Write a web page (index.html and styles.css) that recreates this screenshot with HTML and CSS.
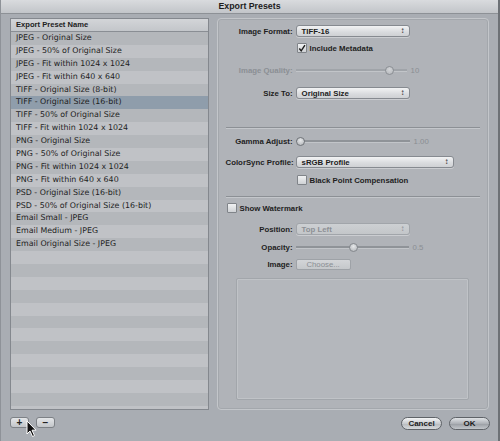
FILE: index.html
```html
<!DOCTYPE html>
<html>
<head>
<meta charset="utf-8">
<link rel="stylesheet" href="styles.css">
</head>
<body>
<div class="window">
  <div class="titlebar">Export Presets</div>
  <div class="main">
    <div class="list">
      <div class="list-head">Export Preset Name</div>
      <div class="rows">
        <div class="row">JPEG - Original Size</div>
        <div class="row">JPEG - 50% of Original Size</div>
        <div class="row">JPEG - Fit within 1024 x 1024</div>
        <div class="row">JPEG - Fit within 640 x 640</div>
        <div class="row">TIFF - Original Size (8-bit)</div>
        <div class="row selected">TIFF - Original Size (16-bit)</div>
        <div class="row">TIFF - 50% of Original Size</div>
        <div class="row">TIFF - Fit within 1024 x 1024</div>
        <div class="row">PNG - Original Size</div>
        <div class="row">PNG - 50% of Original Size</div>
        <div class="row">PNG - Fit within 1024 x 1024</div>
        <div class="row">PNG - Fit within 640 x 640</div>
        <div class="row">PSD - Original Size (16-bit)</div>
        <div class="row">PSD - 50% of Original Size (16-bit)</div>
        <div class="row">Email Small - JPEG</div>
        <div class="row">Email Medium - JPEG</div>
        <div class="row">Email Original Size - JPEG</div>
        <div class="row"></div>
        <div class="row"></div>
        <div class="row"></div>
        <div class="row"></div>
        <div class="row"></div>
        <div class="row"></div>
        <div class="row"></div>
        <div class="row"></div>
        <div class="row"></div>
        <div class="row"></div>
        <div class="row"></div>
        <div class="row"></div>
        <div class="row"></div>
      </div>
    </div>
    <div class="panel">
      <div class="frow r1">
        <span class="label">Image Format:</span>
        <div class="popup w-short"><span>TIFF-16</span><span class="arrows">&#x2195;</span></div>
      </div>
      <div class="frow r2">
        <span class="label"></span>
        <div class="check checked"><svg width="9" height="9" viewBox="0 0 9 9"><path d="M1.5 4.5 L3.6 7.2 L7.8 0.8" fill="none" stroke="#1c1c1c" stroke-width="1.6"/></svg></div>
        <span class="ctext">Include Metadata</span>
      </div>
      <div class="frow r3 disabled">
        <span class="label">Image Quality:</span>
        <div class="slider s1"><div class="knob" style="left:89px"></div></div>
        <span class="val">10</span>
      </div>
      <div class="frow r4">
        <span class="label">Size To:</span>
        <div class="popup w-short"><span>Original Size</span><span class="arrows">&#x2195;</span></div>
      </div>
      <div class="sep sep1"></div>
      <div class="frow r5">
        <span class="label">Gamma Adjust:</span>
        <div class="slider s2"><div class="knob" style="left:0px"></div></div>
        <span class="val">1.00</span>
      </div>
      <div class="frow r6">
        <span class="label">ColorSync Profile:</span>
        <div class="popup w-long"><span>sRGB Profile</span><span class="arrows">&#x2195;</span></div>
      </div>
      <div class="frow r7">
        <span class="label"></span>
        <div class="check"></div>
        <span class="ctext">Black Point Compensation</span>
      </div>
      <div class="sep sep2"></div>
      <div class="frow r8 noindent">
        <div class="check"></div>
        <span class="ctext">Show Watermark</span>
      </div>
      <div class="frow r9">
        <span class="label">Position:</span>
        <div class="popup w-short dim"><span>Top Left</span><span class="arrows">&#x2195;</span></div>
      </div>
      <div class="frow r10">
        <span class="label">Opacity:</span>
        <div class="slider s3 dimslider"><div class="knob" style="left:53px"></div></div>
        <span class="val">0.5</span>
      </div>
      <div class="frow r11">
        <span class="label">Image:</span>
        <div class="button dim">Choose...</div>
      </div>
      <div class="well"></div>
    </div>
  </div>
  <div class="footer">
    <div class="small-btns">
      <div class="sbtn">+</div>
      <div class="sbtn">&#x2212;</div>
    </div>
    <div class="dlg-btns">
      <div class="pill">Cancel</div>
      <div class="pill ok">OK</div>
    </div>
  </div>
  <svg class="cursor" width="12" height="18" viewBox="0 0 12 18"><path d="M1 1 L1 14 L4 11 L6.5 16.5 L8.5 15.6 L6 10.2 L10 10.2 Z" fill="#111" stroke="#fff" stroke-width="1"/></svg>
</div>
</body>
</html>
```

FILE: styles.css
```css
* { box-sizing: border-box; }
html, body { margin: 0; padding: 0; }
body { width: 500px; height: 441px; overflow: hidden; background: #a8acb2; font-family: "Liberation Sans", Arial, sans-serif; color: #1b1b1b; }

.window { position: relative; width: 500px; height: 441px; display: flex; flex-direction: column; background: #a9adb3; border-left: 1px solid #8e9298; border-right: 2px solid #6d7176; }

.titlebar { height: 14px; flex: none; background: linear-gradient(#d9dbde, #c2c5c9); border-bottom: 1px solid #8d9196; text-align: center; font-weight: bold; font-size: 8.8px; line-height: 13px; color: #1d1d1d; }

.main { display: flex; gap: 8px; padding: 4px 9px 0 9px; height: 396px; flex: none; }

.list { width: 199px; height: 392px; border: 1px solid #84888e; background: #c1c3c7; display: flex; flex-direction: column; overflow: hidden; }
.list-head { height: 13px; flex: none; background: linear-gradient(#d3d5d8, #c3c6ca); border-bottom: 1px solid #8a8e94; font-weight: bold; font-size: 7.6px; line-height: 12px; padding-left: 5px; color: #222; }
.rows { flex: 1; overflow: hidden; }
.row { height: 12.9px; line-height: 12.9px; font-family: "DejaVu Sans", "Liberation Sans", sans-serif; font-size: 7.9px; padding-left: 5px; white-space: nowrap; background: #c0c2c6; color: #1e1e1e; }
.row:nth-child(odd) { background: #b4b7bb; }
.row.selected { background: #8f9dab; }

.panel { width: 273px; height: 392px; border: 1px solid #c3c6ca; border-radius: 4px; background: #b0b3b8; box-shadow: inset 0 0 0 1px #a3a7ac; padding: 6px 8px 0 8px; display: flex; flex-direction: column; }

.frow { display: flex; align-items: center; height: 12px; flex: none; }
.label { width: 67px; flex: none; text-align: right; font-weight: bold; font-size: 7.8px; margin-right: 3px; white-space: nowrap; color: #1e1e1e; }
.r1 { margin-top: 0; }
.r2 { margin-top: 5px; }
.r3 { margin-top: 10px; }
.r4 { margin-top: 11px; }
.sep1 { margin-top: 28px; }
.r5 { margin-top: 6px; }
.r6 { margin-top: 9px; }
.r7 { margin-top: 6px; }
.sep2 { margin-top: 10px; }
.r8 { margin-top: 4px; }
.r9 { margin-top: 9px; }
.r10 { margin-top: 6px; }
.r11 { margin-top: 5px; }

.sep { height: 2px; flex: none; border-top: 1px solid #8c9095; border-bottom: 1px solid #c4c7cb; }

.popup { height: 12px; border: 1px solid #868a90; border-radius: 3px; background: linear-gradient(#f2f3f4, #d9dbde 60%, #cfd1d4); display: flex; justify-content: space-between; align-items: center; padding: 0 4px 0 5px; font-weight: bold; font-size: 7.8px; color: #1c1c1c; box-shadow: 0 1px 0 rgba(255,255,255,0.35); }
.w-short { width: 114px; }
.w-long { width: 158px; }
.arrows { font-size: 8px; font-weight: bold; line-height: 10px; }
.popup.dim { color: #8d9095; background: linear-gradient(#cdd0d3, #c3c6c9); border-color: #a1a5aa; }

.check { width: 10px; height: 10px; flex: none; border: 1px solid #808489; border-radius: 1px; background: linear-gradient(#f0f1f2, #cfd2d5); display: flex; align-items: center; justify-content: center; margin-left: 1px; }
.ctext { font-weight: bold; font-size: 7.8px; margin-left: 3px; color: #1e1e1e; white-space: nowrap; }
.noindent .check { margin-left: 1px; }

.slider { position: relative; height: 8px; flex: none; }
.slider::before { content: ""; position: absolute; left: 0; right: 0; top: 3px; height: 2px; background: #8f9398; border-bottom: 1px solid #c2c5c9; }
.s1 { width: 111px; }
.s2 { width: 114px; }
.s3 { width: 113px; }
.knob { position: absolute; top: 0; width: 9px; height: 9px; border-radius: 50%; border: 1px solid #6f7378; background: radial-gradient(circle at 50% 35%, #e6e8ea, #aeb1b5); }
.disabled .label, .disabled .val { color: #8b8f94; }
.disabled .slider::before { background: #a0a4a9; }
.disabled .knob { border-color: #8b8f94; background: radial-gradient(circle at 50% 35%, #d2d4d7, #b3b6ba); }
.dimslider .knob { border-color: #84888d; }
.val { font-size: 7.8px; margin-left: 4px; color: #8a8e93; }

.button { width: 55px; height: 11px; border: 1px solid #9ea2a7; border-radius: 2px; background: linear-gradient(#d3d5d8, #c5c8cb); font-size: 7.8px; text-align: center; line-height: 9px; color: #8a8e93; }

.well { margin: 8px 11px 0 10px; height: 122px; flex: none; border: 1px solid #a2a6ab; border-radius: 2px; background: #b4b7bc; box-shadow: inset 0 0 0 1px #c0c3c7; }

.footer { flex: 1; display: flex; justify-content: space-between; align-items: flex-start; padding: 7px 8px 0 9px; }
.small-btns { display: flex; gap: 7px; }
.sbtn { width: 19px; height: 11px; border: 1px solid #7d8186; border-radius: 3px; background: linear-gradient(#e4e6e8, #c2c5c9); font-weight: bold; font-size: 10px; line-height: 9px; text-align: center; color: #222; }
.dlg-btns { display: flex; gap: 7px; }
.pill { width: 41px; height: 13px; border: 1px solid #5f6368; border-radius: 7px; background: linear-gradient(#f4f5f6, #c8cbcf 50%, #b6b9bd 51%, #d6d9dc); font-weight: bold; font-size: 8px; line-height: 11px; text-align: center; color: #1c1c1c; }
.pill.ok { background: linear-gradient(#dfe2e5, #aeb2b7 50%, #989ca2 51%, #c2c6ca); }

.cursor { position: absolute; left: 25px; top: 420px; }
```
